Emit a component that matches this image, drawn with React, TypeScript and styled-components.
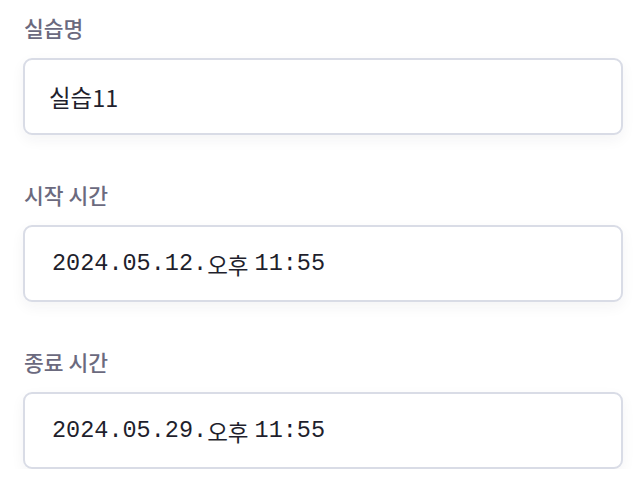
import React from "react";
import styled, { createGlobalStyle } from "styled-components";

const GlobalStyle = createGlobalStyle`
  html, body { margin: 0; padding: 0; background: #ffffff; }
  body { font-family: "Noto Sans CJK KR", "Noto Sans", sans-serif; }
`;

const Form = styled.div`
  display: flex;
  flex-direction: column;
  gap: 46px;
  padding: 14px 19px 0 23px;
  width: 600px;
`;

const Field = styled.div`
  display: flex;
  flex-direction: column;
  gap: 16px;
`;

const Label = styled.label`
  font-family: "Noto Sans CJK KR", "Noto Sans", sans-serif;
  font-size: 21.5px;
  line-height: 28px;
  font-weight: 500;
  color: #6b6a7e;
  padding-left: 1px;
`;

const Box = styled.div<{ $mono?: boolean }>`
  box-sizing: border-box;
  height: 77px;
  border: 2px solid #d9dce6;
  border-radius: 9px;
  background: #ffffff;
  box-shadow: 0 5px 14px rgba(30, 35, 60, 0.05);
  display: flex;
  align-items: center;
  padding-left: ${(p) => (p.$mono ? "27px" : "24px")};
  font-family: ${(p) =>
    p.$mono
      ? `"Liberation Mono", "Noto Sans CJK KR", monospace`
      : `"Noto Sans CJK KR", "Noto Sans", sans-serif`};
  font-size: 23.5px;
  color: #1f1f2d;
  letter-spacing: 0;
`;

const Ampm = styled.span`
  font-family: "Noto Sans CJK KR", sans-serif;
  font-size: 22.5px;
  margin-right: 6px;
`;

export default function App() {
  return (
    <>
      <GlobalStyle />
      <Form>
        <Field>
          <Label>실습명</Label>
          <Box>실습11</Box>
        </Field>
        <Field>
          <Label>시작 시간</Label>
          <Box $mono>
            2024.05.12.<Ampm>오후</Ampm>11:55
          </Box>
        </Field>
        <Field>
          <Label>종료 시간</Label>
          <Box $mono>
            2024.05.29.<Ampm>오후</Ampm>11:55
          </Box>
        </Field>
      </Form>
    </>
  );
}
